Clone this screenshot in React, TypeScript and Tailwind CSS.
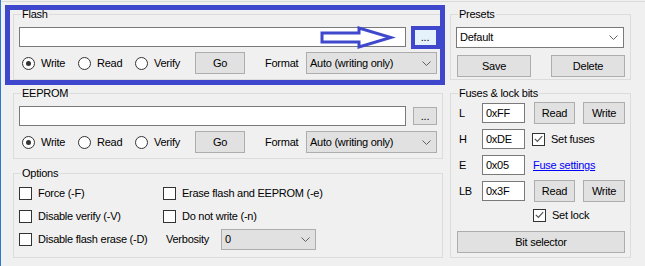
import React from 'react';

const Btn = ({ children, className = '', h = 'h-[22px]' }: { children: React.ReactNode; className?: string; h?: string }) => (
  <button className={`flex-none flex items-center justify-center bg-[#e1e1e1] border border-[#adadad] leading-none ${h} ${className}`}>
    {children}
  </button>
);

const Chevron = () => (
  <svg width="9" height="5" viewBox="0 0 9 5" className="flex-none">
    <path d="M0.5 0.5 L4.5 4.5 L8.5 0.5" stroke="#606060" strokeWidth="1" fill="none" />
  </svg>
);

const Combo = ({ value, className = '', white = false }: { value: string; className?: string; white?: boolean }) => (
  <div
    className={`flex-none flex items-center pl-[3px] pr-[5px] border ${
      white ? 'bg-white border-[#7a7a7a]' : 'bg-[#e1e1e1] border-[#adadad]'
    } ${className}`}
  >
    <span className="flex-1">{value}</span>
    <Chevron />
  </div>
);

const TextBox = ({ value = '', className = '' }: { value?: string; className?: string }) => (
  <div className={`flex items-center pl-[3px] bg-white border border-[#7a7a7a] ${className}`}>{value}</div>
);

const Radio = ({ label, checked = false, className = '' }: { label: string; checked?: boolean; className?: string }) => (
  <label className={`flex-none flex items-center gap-[6px] ${className}`}>
    <span className="w-[13px] h-[13px] rounded-full border border-[#333] bg-white flex items-center justify-center">
      {checked && <span className="w-[5px] h-[5px] rounded-full bg-[#333]" />}
    </span>
    {label}
  </label>
);

const Check = ({ label, checked = false, className = '' }: { label: string; checked?: boolean; className?: string }) => (
  <label className={`flex-none flex items-center gap-[6px] ${className}`}>
    <span className="w-[13px] h-[13px] border border-[#333] bg-white flex items-center justify-center">
      {checked && (
        <svg width="9" height="8" viewBox="0 0 9 8">
          <path d="M0.8 3.8 L3.4 6.4 L8.2 1.2" stroke="#555" strokeWidth="1.2" fill="none" />
        </svg>
      )}
    </span>
    {label}
  </label>
);

const Group = ({ title, className = '', children }: { title: string; className?: string; children: React.ReactNode }) => (
  <fieldset className={`m-0 p-0 min-w-0 border border-[#dcdcdc] ${className}`}>
    <legend className="ml-[7px] px-[1px] leading-[15px]">{title}</legend>
    {children}
  </fieldset>
);

const FuseRow = ({ name, value, children }: { name: string; value: string; children?: React.ReactNode }) => (
  <div className="flex items-center h-[22px] pl-[8px]">
    <span className="w-[23px]">{name}</span>
    <TextBox value={value} className="flex-none w-[43px] h-[20px]" />
    {children}
  </div>
);

const FileRow = ({ highlight = false }: { highlight?: boolean }) => (
  <>
    <div className="flex items-center gap-[7px]">
      <TextBox className="flex-1 h-[20px]" />
      <Btn h="h-[18px]" className={`w-[24px] ${highlight ? 'bg-[#e5f1fb] border-[#0078d7]' : ''}`}>
        ...
      </Btn>
    </div>
    <div className="flex items-center h-[22px] mt-[5px]">
      <Radio checked label="Write" className="ml-[3px] w-[56px]" />
      <Radio label="Read" className="w-[57px]" />
      <Radio label="Verify" className="w-[60px]" />
      <Btn className="w-[50px]">Go</Btn>
      <span className="ml-[20px] w-[42px]">Format</span>
      <Combo value="Auto (writing only)" className="w-[131px] h-[22px]" />
    </div>
  </>
);

const App: React.FC = () => {
  return (
    <div className="relative w-[645px] h-[266px] overflow-hidden bg-[#f0f0f0] border-l border-[#2b79d3] font-['Liberation_Sans',Arial,sans-serif] text-[11px] tracking-[-0.25px] text-black">
      <div className="h-[2px] border-b border-[#dadada]" />
      <div className="flex gap-[7px] pl-[12px] pt-[5px]">
        {/* left column */}
        <div className="w-[430px] flex flex-col">
          <Group title="Flash">
            <div className="px-[5px] pt-[5px] pb-[5px]">
              <FileRow highlight />
            </div>
          </Group>

          <Group title="EEPROM" className="mt-[6px]">
            <div className="px-[5px] pt-[5px] pb-[5px]">
              <FileRow />
            </div>
          </Group>

          <Group title="Options" className="mt-[7px]">
            <div className="grid grid-cols-[144px_1fr] auto-rows-[23px] items-center pl-[5px] pt-[1px] pb-[6px]">
              <Check label="Force (-F)" />
              <Check label="Erase flash and EEPROM (-e)" />
              <Check label="Disable verify (-V)" />
              <Check label="Do not write (-n)" />
              <Check label="Disable flash erase (-D)" />
              <div className="flex items-center">
                <span className="ml-[3px] w-[55px]">Verbosity</span>
                <Combo value="0" className="w-[95px] h-[21px]" />
              </div>
            </div>
          </Group>
        </div>

        {/* right column */}
        <div className="w-[181px] flex flex-col">
          <Group title="Presets">
            <div className="pt-[5px] pb-[2px]">
              <Combo white value="Default" className="ml-[5px] w-[168px] h-[21px]" />
              <div className="flex gap-[20px] mt-[7px] pl-[6px]">
                <Btn className="w-[74px]">Save</Btn>
                <Btn className="w-[74px]">Delete</Btn>
              </div>
            </div>
          </Group>

          <Group title="Fuses & lock bits" className="mt-[6px]">
            <div className="flex flex-col gap-[4px] pt-[1px] pb-[4px]">
              <FuseRow name="L" value="0xFF">
                <Btn className="ml-[9px] w-[41px]">Read</Btn>
                <Btn className="ml-[8px] w-[42px]">Write</Btn>
              </FuseRow>
              <FuseRow name="H" value="0xDE">
                <Check checked label="Set fuses" className="ml-[7px]" />
              </FuseRow>
              <FuseRow name="E" value="0x05">
                <a href="#" className="ml-[8px] text-[#0000ff] underline">
                  Fuse settings
                </a>
              </FuseRow>
              <FuseRow name="LB" value="0x3F">
                <Btn className="ml-[9px] w-[41px]">Read</Btn>
                <Btn className="ml-[8px] w-[42px]">Write</Btn>
              </FuseRow>
              <div className="flex items-center h-[18px] pl-[82px]">
                <Check checked label="Set lock" />
              </div>
              <Btn className="mt-[3px] ml-[6px] w-[168px]">Bit selector</Btn>
            </div>
          </Group>
        </div>
      </div>

      {/* annotation drawn over the screenshot */}
      <div className="absolute left-[4px] top-[5px] w-[440px] h-[80px] border-[5px] border-[#3f48cc]" />
      <div className="absolute left-[410px] top-[26px] w-[29px] h-[23px] border-[4px] border-[#3f48cc]" />
      <svg className="absolute left-[317px] top-[25px]" width="78" height="25" viewBox="0 0 78 25">
        <polygon
          points="4,8 41,8 41,3 73,12.5 41,22 41,17 4,17"
          fill="#ffffff"
          stroke="#3f48cc"
          strokeWidth="3"
          strokeLinejoin="miter"
        />
      </svg>
    </div>
  );
};

export default App;
